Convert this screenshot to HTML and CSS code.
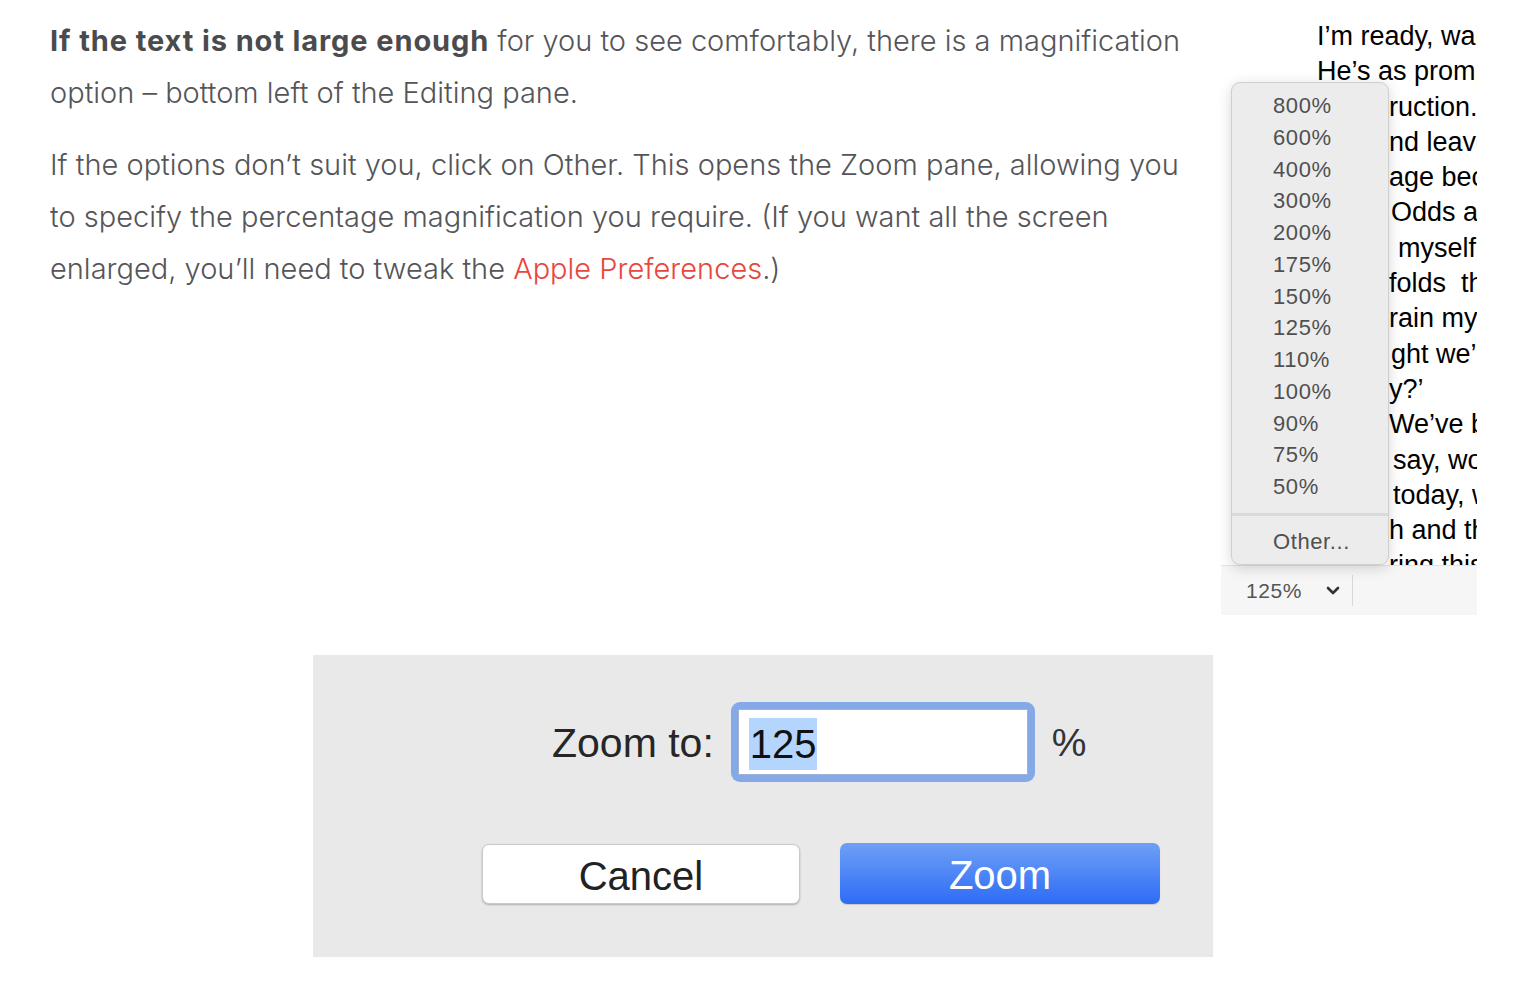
FILE: index.html
```html
<!DOCTYPE html>
<html lang="en">
<head>
<meta charset="utf-8">
<title>Zoom</title>
<link rel="stylesheet" href="styles.css">
</head>
<body>
<div class="page">
  <div class="top">
    <div class="article">
      <p class="para"><strong>If the text is not large enough</strong> for you to see comfortably, there is a magnification<br>option – bottom left of the Editing pane.</p>
      <p class="para">If the options don’t suit you, click on Other. This opens the Zoom pane, allowing you<br>to specify the percentage magnification you require. (If you want all the screen<br>enlarged, you’ll need to tweak the <a class="link" href="#">Apple Preferences</a>.)</p>
    </div>
    <div class="editor">
      <div class="doc">
        <div class="line l0">I’m ready, waiting</div>
        <div class="line l0">He’s as prompt</div>
        <div class="line l1">ruction.</div>
        <div class="line l1">nd leave</div>
        <div class="line l1">age bec</div>
        <div class="line l2">Odds a</div>
        <div class="line l3">myself</div>
        <div class="line l1">folds&nbsp; th</div>
        <div class="line l1">rain my</div>
        <div class="line l2">ght we’</div>
        <div class="line l1">y?’</div>
        <div class="line l1">We’ve b</div>
        <div class="line l4">say, wo</div>
        <div class="line l4">today, w</div>
        <div class="line l1">h and th</div>
        <div class="line l1">ring this</div>
      </div>
      <div class="statusbar">
        <span class="zoomval">125%</span>
        <svg class="chev" width="14" height="10" viewBox="0 0 14 10"><path d="M2 2 L7 7 L12 2" fill="none" stroke="#333" stroke-width="2.6" stroke-linecap="round" stroke-linejoin="round"/></svg>
        <span class="vsep"></span>
      </div>
      <div class="menu">
        <div class="item">800%</div>
        <div class="item">600%</div>
        <div class="item">400%</div>
        <div class="item">300%</div>
        <div class="item">200%</div>
        <div class="item">175%</div>
        <div class="item">150%</div>
        <div class="item">125%</div>
        <div class="item">110%</div>
        <div class="item">100%</div>
        <div class="item">90%</div>
        <div class="item">75%</div>
        <div class="item">50%</div>
        <div class="msep"></div>
        <div class="item">Other...</div>
      </div>
    </div>
  </div>
  <div class="dialog">
    <div class="row1">
      <span class="label">Zoom to:</span>
      <div class="ring"><div class="field"><span class="sel">125</span></div></div>
      <span class="pct">%</span>
    </div>
    <div class="row2">
      <div class="btn cancel">Cancel</div>
      <div class="btn primary">Zoom</div>
    </div>
  </div>
</div>
</body>
</html>
```

FILE: styles.css
```css
* { box-sizing: border-box; }
html, body { margin: 0; padding: 0; background: #fff; }
.page { width: 1536px; }
.top { display: flex; padding-top: 15px; }
.article { width: 1221px; flex: none; padding-left: 50px; }
.para {
  margin: 0 0 20px 0;
  font-family: "Inter", "Noto Sans", sans-serif;
  font-weight: 300;
  font-size: 29px;
  line-height: 52px;
  color: #555558;
  white-space: nowrap;
}
.para strong { font-weight: 700; color: #4b4b4d; letter-spacing: 0.9px; }
.link { color: #e8473d; text-decoration: none; }

.editor { position: relative; flex: none; width: 256px; height: 600px; }
.doc {
  height: 550px;
  overflow: hidden;
  padding-top: 4px;
  background: #fff;
  font-family: "Liberation Sans", Arial, sans-serif;
  font-size: 27px;
  line-height: 35.3px;
  color: #000;
  white-space: nowrap;
}
.line.l0 { padding-left: 96px; }
.line.l1 { padding-left: 168px; }
.line.l2 { padding-left: 170px; }
.line.l3 { padding-left: 177px; }
.line.l4 { padding-left: 172px; }
.statusbar {
  height: 50px;
  background: #f6f6f6;
  border-top: 1px solid #e4e4e4;
  display: flex;
  align-items: center;
  padding-left: 25px;
  font-family: "Liberation Sans", Arial, sans-serif;
  font-size: 21px;
  color: #555;
}
.zoomval { letter-spacing: 0.6px; }
.chev { margin-left: 24px; }
.vsep { width: 1px; height: 31px; background: #d8d8d8; margin-left: 12px; }

.menu {
  position: absolute;
  left: 10px;
  top: 67px;
  width: 158px;
  height: 483px;
  background: #ececec;
  border: 1px solid #cfcfcf;
  border-radius: 9px;
  box-shadow: 0 3px 14px rgba(0,0,0,0.16);
  padding-top: 7px;
  font-family: "Liberation Sans", Arial, sans-serif;
  font-size: 22px;
  color: #505050;
}
.item { padding-left: 41px; line-height: 31.75px; letter-spacing: 0.6px; }
.msep { height: 3px; background: #dadada; margin: 10px 0 10px 0; }

.dialog {
  margin: 40px 0 0 313px;
  width: 900px;
  height: 302px;
  background: #e9e9e9;
  padding-top: 47px;
  font-family: "Liberation Sans", Arial, sans-serif;
}
.row1 { display: flex; align-items: center; padding-left: 239px; }
.label { font-size: 41px; color: #262626; margin-right: 17px; padding-top: 2px; }
.ring {
  width: 304px;
  height: 80px;
  background: #85a8e7;
  border-radius: 9px;
  padding: 7px;
}
.field {
  height: 100%;
  background: #fff;
  border: 1px solid #9fb3d6;
  padding: 8px 0 0 10px;
}
.sel {
  display: inline-block;
  background: #b4d5fe;
  font-size: 40px;
  line-height: 51px;
  color: #111;
  padding: 1px 0 0 1px;
}
.pct { font-size: 39px; color: #333; margin-left: 17px; padding-top: 2px; }
.row2 { display: flex; gap: 40px; padding-left: 169px; margin-top: 62px; }
.btn {
  width: 318px;
  height: 60px;
  border-radius: 7px;
  display: flex;
  align-items: center;
  justify-content: center;
  font-size: 40px;
  padding-top: 4px;
}
.cancel {
  background: #fff;
  border: 1px solid #c9c9c9;
  box-shadow: 0 1px 2px rgba(0,0,0,0.25);
  color: #222;
}
.primary {
  width: 320px;
  height: 61px;
  margin-top: -1px;
  background: linear-gradient(#6ea0f6, #2e6cf5);
  color: #fff;
  box-shadow: 0 1px 1px rgba(0,0,0,0.15);
}
```
